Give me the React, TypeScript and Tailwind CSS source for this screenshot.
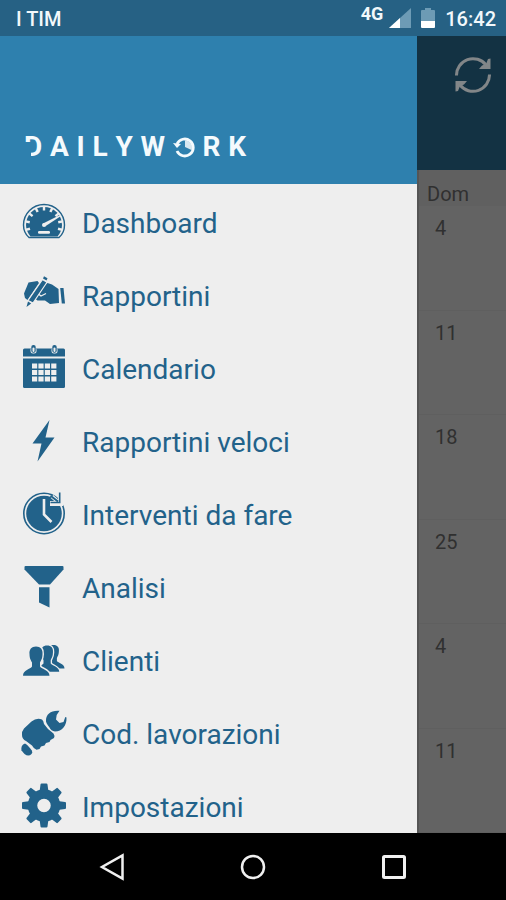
import type { ReactNode } from "react";

const LIGHT = "#eeeeee";

function Icon({ children }: { children: ReactNode }) {
  return (
    <svg viewBox="0 0 44 44" className="mb-1.5 size-11 shrink-0 overflow-visible" fill="currentColor" aria-hidden="true">
      {children}
    </svg>
  );
}

function DashboardIcon() {
  const ticks = [-105, -79, -52, -26, 0, 26, 52, 79, 105];
  return (
    <Icon>
      <path d="M7 38.500H37C40.500 35.500 42.500 30.700 42.500 26A20.500 20.500 0 0 0 1.500 26C1.500 30.700 3.500 35.500 7 38.500Z" fill="none" stroke="currentColor" strokeWidth="1.400" />
      <path d="M8.500 37.500H35.500C38.500 34 40 29.500 40 26A18 18 0 0 0 4 26C4 29.500 5.500 34 8.500 37.500Z" />
      {ticks.map((a) => (
        <rect key={a} x="20.800" y="7" width="2.400" height="4.500" fill={LIGHT} transform={`rotate(${a} 22 26)`} />
      ))}
      <path d="M21 24.500L37.500 16.200L38.200 17.500L23 27.500Z" fill={LIGHT} />
      <circle cx="22" cy="26" r="2" fill={LIGHT} />
      <rect x="16" y="32" width="12" height="2.800" rx="1.200" fill={LIGHT} />
    </Icon>
  );
}

function ReportIcon() {
  return (
    <Icon>
      <path d="M6.500 10.500L15.500 9L17 11L5.500 28L3 26L2 21.500Z" />
      <path d="M25.500 11L30 12.500L36.500 17L37 31L28 32L23 28.500L15.500 28.500L12 26L19 15Z" />
      <path d="M18.500 18.500L16.500 22L19 24L24 21.500" fill="none" stroke={LIGHT} strokeWidth="1.300" />
      <path d="M20.500 7.500L25 10.300L11 31L6 28.500Z" stroke={LIGHT} strokeWidth="1.200" />
      <path d="M22 4.200L25.500 6.200L24.500 8.500L21 6.500Z" />
      <path d="M6 29.500L9.200 31.500L4.500 35Z" />
      <path d="M38.200 16L41.500 16L43 31.500L39.800 31.500Z" />
    </Icon>
  );
}

function CalendarIcon() {
  const cols = [10, 16.4, 22.8, 29.2];
  const rows = [18.5, 25, 31.5];
  return (
    <Icon>
      <path d="M2.500 3.500H41.500Q43 3.500 43 5V11.500H1V5Q1 3.500 2.500 3.500Z" />
      <path d="M1 13.500H43V41.500Q43 43 41.500 43H2.500Q1 43 1 41.500Z" />
      {[11.5, 32.5].map((x) => (
        <g key={x}>
          <rect x={x - 3} y="2.500" width="6" height="6" rx="2.500" fill={LIGHT} />
          <rect x={x - 2.2} y="0" width="4.400" height="7.700" rx="2" />
          <rect x={x - 1} y="2.500" width="2" height="4.500" rx="1" fill={LIGHT} />
        </g>
      ))}
      {rows.map((y) => cols.map((x) => <rect key={`${x}-${y}`} x={x} y={y} width="5.200" height="5" fill={LIGHT} />))}
    </Icon>
  );
}

function BoltIcon() {
  return (
    <Icon>
      <path d="M27.500 2L10.500 25.500H19.500L15.500 43.500L32.500 19.500H23.500Z" />
    </Icon>
  );
}

function ClockIcon() {
  return (
    <Icon>
      <circle cx="22" cy="22.500" r="20.200" fill="none" stroke="currentColor" strokeWidth="1.600" />
      <circle cx="22" cy="22.500" r="17.800" />
      <path d="M22 8V23.500L29.500 31" fill="none" stroke={LIGHT} strokeWidth="2.600" />
      <path d="M38.500 0V12.500H28" fill="none" stroke={LIGHT} strokeWidth="5" />
      <path d="M30 5.500L37 11.500" fill="none" stroke={LIGHT} strokeWidth="4" />
      <path d="M28.500 4.800L36 10.500" fill="none" stroke="currentColor" strokeWidth="2" />
      <path d="M37.700 1.500V11.500H28.500" fill="none" stroke="currentColor" strokeWidth="1.600" />
    </Icon>
  );
}

function FunnelIcon() {
  return (
    <Icon>
      <path d="M3.500 2H40.500Q41.500 2 41.500 3V5.500L28 20.500H17L2.500 5.500V3Q2.500 2 3.500 2Z" />
      <path d="M17 23.200H27.500V43.500L17 38.500Z" />
    </Icon>
  );
}

function ClientsIcon() {
  const person =
    "M14 9.500C18.500 9.500 21 12.500 20.500 17C20.500 21.500 19 23.500 18 25.500V29.500C19.500 32 27.500 33 27.500 38.700H1C1 33 8.500 32 10 29.500V25.500C9 23.500 7.500 21.500 7.500 17C7 12.500 9.500 9.500 14 9.500Z";
  return (
    <Icon>
      <path d={person} transform="translate(20.500 0.500) scale(0.800)" />
      <path d={person} transform="translate(12.500 0) scale(0.900)" stroke={LIGHT} strokeWidth="3" paintOrder="stroke" />
      <path d={person} stroke={LIGHT} strokeWidth="3" paintOrder="stroke" />
    </Icon>
  );
}

function WrenchIcon() {
  return (
    <Icon>
      <path d="M2 18.500L9.500 11.500Q14.500 7.500 20 9.500Q21.500 10.500 22 14L26 19L31.500 23.500Q33 25.500 32 28L28.500 30L27.500 32L24 33L22.500 35.500L19 36.500L17.500 39L14.500 39.700Q11.500 38.500 10 35.500L4 31Q0 29 0 25Q-0.500 21.500 2 18.500Z" />
      <path d="M3 33.500Q5 34 9.800 40.500Q11 42.500 9.500 44Q6.500 47 2.500 44L-0.500 40.500Q-1.500 35 3 33.500Z" />
      <path d="M37.500 0.800C29 0 24 4.500 24 10C23.500 12 25 14 27.500 17.500Q29 21 33 21.500C40 21.500 45 15.500 44.500 7.500L43.300 7L41.500 12L37.500 13L34 9.500L34.700 5Z" />
    </Icon>
  );
}

function GearIcon() {
  return (
    <Icon>
      {[0, 45, 90, 135, 180, 225, 270, 315].map((a) => (
        <path key={a} d="M17.500 9L18.500 1.500Q18.600 0.500 19.600 0.500H24.400Q25.400 0.500 25.500 1.500L26.500 9Z" transform={`rotate(${a} 22 22.500)`} />
      ))}
      <circle cx="22" cy="22.500" r="11.500" fill="none" stroke="currentColor" strokeWidth="9.500" />
    </Icon>
  );
}

const MENU = [
  { label: "Dashboard", icon: <DashboardIcon /> },
  { label: "Rapportini", icon: <ReportIcon /> },
  { label: "Calendario", icon: <CalendarIcon /> },
  { label: "Rapportini veloci", icon: <BoltIcon /> },
  { label: "Interventi da fare", icon: <ClockIcon /> },
  { label: "Analisi", icon: <FunnelIcon /> },
  { label: "Clienti", icon: <ClientsIcon /> },
  { label: "Cod. lavorazioni", icon: <WrenchIcon /> },
  { label: "Impostazioni", icon: <GearIcon /> },
];

const SUNDAYS = ["4", "11", "18", "25", "4", "11"];

function StatusBar() {
  return (
    <header className="flex h-9 shrink-0 items-center bg-[#266184] pr-2.5 pl-4 text-xl font-medium text-[#f2f8fb]">
      <span className="flex-1 pt-0.5">I TIM</span>
      <span className="pb-2 text-lg leading-none font-bold">4G</span>
      <svg viewBox="0 0 22 20" className="ml-1.5 h-5 w-[22px]" aria-hidden="true">
        <path d="M22 0V20H0Z" fill="#6d9bb5" />
        <path d="M11 10V20H0Z" fill="#ffffff" />
      </svg>
      <svg viewBox="0 0 14 20" className="ml-2.5 h-5 w-3.5" aria-hidden="true">
        <path d="M4 0H10V2H13Q14 2 14 3V13H0V3Q0 2 1 2H4Z" fill="#6d9bb5" />
        <path d="M0 13H14V19Q14 20 13 20H1Q0 20 0 19Z" fill="#ffffff" />
      </svg>
      <span className="ml-2.5 pt-0.5">16:42</span>
    </header>
  );
}

function Logo() {
  return (
    <h1 className="flex w-[222px] items-center justify-between text-[28px] leading-8 font-bold text-[#f4fafd]">
      <span className="relative">
        D
        <span className="absolute top-[11px] left-0 h-4 w-[7px] bg-[#2e80ae]" />
      </span>
      <span>A</span>
      <span>I</span>
      <span>L</span>
      <span>Y</span>
      <span>W</span>
      <svg viewBox="0 0 22 22" className="size-[22px]" role="img" aria-label="O" fill="none" stroke="currentColor">
        <path d="M4 8A8.500 8.500 0 1 1 4 15" strokeWidth="2.800" />
        <path d="M0 7L4 12L8 8Z" fill="currentColor" stroke="none" />
        <path d="M12 4.500A7 7 0 0 1 18.500 14L12 11Z" fill="currentColor" stroke="none" opacity="0.850" />
      </svg>
      <span>R</span>
      <span>K</span>
    </h1>
  );
}

function Drawer() {
  return (
    <aside className="flex min-h-0 min-w-0 flex-1 flex-col bg-[#eeeeee]">
      <div className="flex h-[148px] shrink-0 items-end bg-[#2e80ae] px-6 pb-[21px]">
        <Logo />
      </div>
      <nav className="min-h-0 flex-1 overflow-hidden pt-[3px]">
        <ul>
          {MENU.map((item) => (
            <li key={item.label}>
              <button type="button" className="flex h-[73px] w-full items-center gap-4 px-[22px] text-left text-[28px] text-[#22628a]">
                {item.icon}
                <span>{item.label}</span>
              </button>
            </li>
          ))}
        </ul>
      </nav>
    </aside>
  );
}

function DimmedCalendar() {
  return (
    <main className="flex w-[89px] shrink-0 flex-col bg-[#636363] text-xl text-[#303030]">
      <div className="flex h-[134px] shrink-0 justify-end bg-[#133243] px-[15px] pt-[21px]">
        <button type="button" aria-label="Aggiorna" className="size-9 text-[#828688]">
          <svg viewBox="0 0 36 36" className="size-9" fill="none" stroke="currentColor" strokeWidth="3">
            <path d="M1.500 18.500A16.500 16.500 0 0 1 31 8" />
            <path d="M34.500 17.500A16.500 16.500 0 0 1 5 28" />
            <path d="M35.500 1.500V12H24L27 8.500L31 7L33 2Z" fill="currentColor" stroke="none" />
            <path d="M0.500 34.500V24H12L9 27.500L5 29L3 34Z" fill="currentColor" stroke="none" />
          </svg>
        </button>
      </div>
      <table className="flex flex-1 flex-col border-l-2 border-[#555555]">
        <thead className="block h-9 bg-[#606060]">
          <tr className="block">
            <th className="block pt-2 pl-2 text-left leading-8 font-normal">Dom</th>
          </tr>
        </thead>
        <tbody className="flex flex-1 flex-col">
          {SUNDAYS.map((day, i) => (
            <tr key={i} className="block flex-1 border-b border-[#5f5f5f]">
              <td className="block pt-2 pl-4 leading-7">{day}</td>
            </tr>
          ))}
        </tbody>
      </table>
    </main>
  );
}

function NavigationBar() {
  return (
    <footer className="grid h-[67px] shrink-0 grid-cols-3 items-center bg-black px-[42px] text-[#f0f0f0]">
      <button type="button" aria-label="Indietro" className="flex justify-center">
        <svg viewBox="0 0 28 28" className="size-7" fill="none" stroke="currentColor" strokeWidth="2.500">
          <path d="M24.500 2.500V25.500L4 14Z" />
        </svg>
      </button>
      <button type="button" aria-label="Home" className="flex justify-center">
        <svg viewBox="0 0 28 28" className="size-7" fill="none" stroke="currentColor" strokeWidth="2.500">
          <circle cx="14" cy="14" r="11" />
        </svg>
      </button>
      <button type="button" aria-label="Recenti" className="flex justify-center">
        <svg viewBox="0 0 28 28" className="size-7" fill="none" stroke="currentColor" strokeWidth="3">
          <rect x="3.500" y="3.500" width="21" height="21" rx="1" />
        </svg>
      </button>
    </footer>
  );
}

export default function App() {
  return (
    <div className="flex h-screen flex-col overflow-hidden bg-black font-['Roboto',sans-serif]">
      <StatusBar />
      <div className="flex min-h-0 flex-1">
        <Drawer />
        <DimmedCalendar />
      </div>
      <NavigationBar />
    </div>
  );
}
